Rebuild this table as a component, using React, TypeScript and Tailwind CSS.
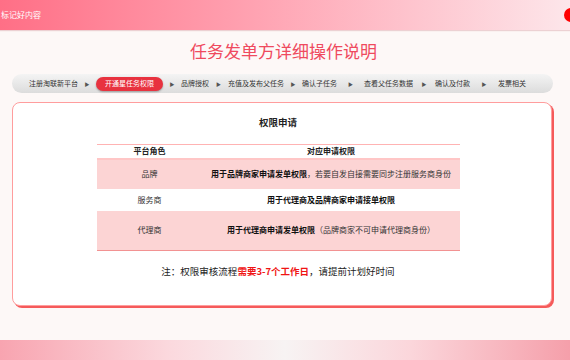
import React from 'react';

const STEPS = ['注册淘联新平台', '开通星任务权限', '品牌授权', '充值及发布父任务', '确认子任务', '查看父任务数据', '确认及付款', '发票相关'];
const GAPS = ['w-[18px]', 'w-[18px]', 'w-[19px]', 'w-[18px]', 'w-[27px]', 'w-[22px]', 'w-[28px]'];
const ACTIVE = 1;

interface Row { role: string; strong: string; rest: string; h: string; pink: boolean; }

const ROWS: Row[] = [
  { role: '品牌', strong: '用于品牌商家申请发单权限', rest: '，若要自发自接需要同步注册服务商身份', h: 'h-[30px]', pink: true },
  { role: '服务商', strong: '用于代理商及品牌商家申请接单权限', rest: '', h: 'h-[22px]', pink: false },
  { role: '代理商', strong: '用于代理商申请发单权限', rest: '（品牌商家不可申请代理商身份）', h: 'h-[40px]', pink: true },
];

const App: React.FC = () => {
  return (
    <div className="w-[570px] h-[360px] overflow-hidden bg-[#fdf8f7] flex flex-col font-['Noto_Sans_CJK_SC','Noto_Sans',sans-serif] text-[#222]">
      {/* header */}
      <div className="h-[30px] shrink-0 flex items-center justify-between overflow-hidden bg-[linear-gradient(90deg,#ff6f86_0%,#ffa3b2_45%,#fde6ea_100%)] shadow-[0_1px_1px_rgba(200,120,130,0.3)]">
        <span className="text-[8px] text-white pl-[1px] leading-none">标记好内容</span>
        <div className="w-[14px] h-[14px] rounded-full bg-[#f00] mr-[-8px]" />
      </div>

      <h1 className="mt-[10px] text-center text-[17px] leading-[22px] text-[#ef4a5e] pr-[3px]">任务发单方详细操作说明</h1>

      {/* steps */}
      <div className="mt-[12px] mx-[12px] w-[541px] h-[19px] rounded-full bg-[linear-gradient(180deg,#f4f4f4,#dcdcdc)] flex items-center pl-[17px] text-[7px] text-[#333]">
        {STEPS.map((s, i) => (
          <React.Fragment key={s}>
            {i === ACTIVE ? (
              <span className="h-[14px] px-[9px] rounded-full bg-[#e8323f] text-white flex items-center shadow-[0_1px_2px_rgba(0,0,0,0.3)]">{s}</span>
            ) : (
              <span>{s}</span>
            )}
            {i < STEPS.length - 1 && <span className={`${GAPS[i]} text-center text-[5px] text-[#555]`}>▶</span>}
          </React.Fragment>
        ))}
      </div>

      {/* card */}
      <div className="mt-[9px] ml-[12px] w-[540px] h-[204px] bg-white rounded-[8px] border border-[#ff9d9d] shadow-[2px_2px_0_#f55a5a] flex flex-col items-center pr-[8px]">
        <div className="mt-[12px] text-[9.5px] font-bold leading-[14px]">权限申请</div>
        <table className="mt-[15px] w-[363px] border-collapse text-[8px] leading-none">
          <thead>
            <tr className="h-[14px] border-t border-[#ffb3b3] border-b-2 border-b-[#ffc6c6] font-bold">
              <th className="w-[106px] text-center">平台角色</th>
              <th className="text-center">对应申请权限</th>
            </tr>
          </thead>
          <tbody>
            {ROWS.map((r, i) => (
              <tr key={r.role} className={`${r.h} ${r.pink ? 'bg-[#fcd4d4]' : 'bg-white'} ${i === ROWS.length - 1 ? 'border-b border-[#f29292]' : ''}`}>
                <td className="text-center text-[#333]">{r.role}</td>
                <td className="text-center text-[#333]"><b className="text-[#111]">{r.strong}</b>{r.rest}</td>
              </tr>
            ))}
          </tbody>
        </table>
        <p className="mt-[13px] text-[9.5px] leading-[14px] text-[#222]">
          注：权限审核流程<b className="text-[#f01414]">需要3-7个工作日</b>，请提前计划好时间
        </p>
      </div>

      <div className="mt-auto h-[20px] bg-[linear-gradient(90deg,#f8a4b0_0%,#fbd9de_30%,#f7f3f3_50%,#fbd6db_72%,#f59faa_100%)]" />
    </div>
  );
};

export default App;
